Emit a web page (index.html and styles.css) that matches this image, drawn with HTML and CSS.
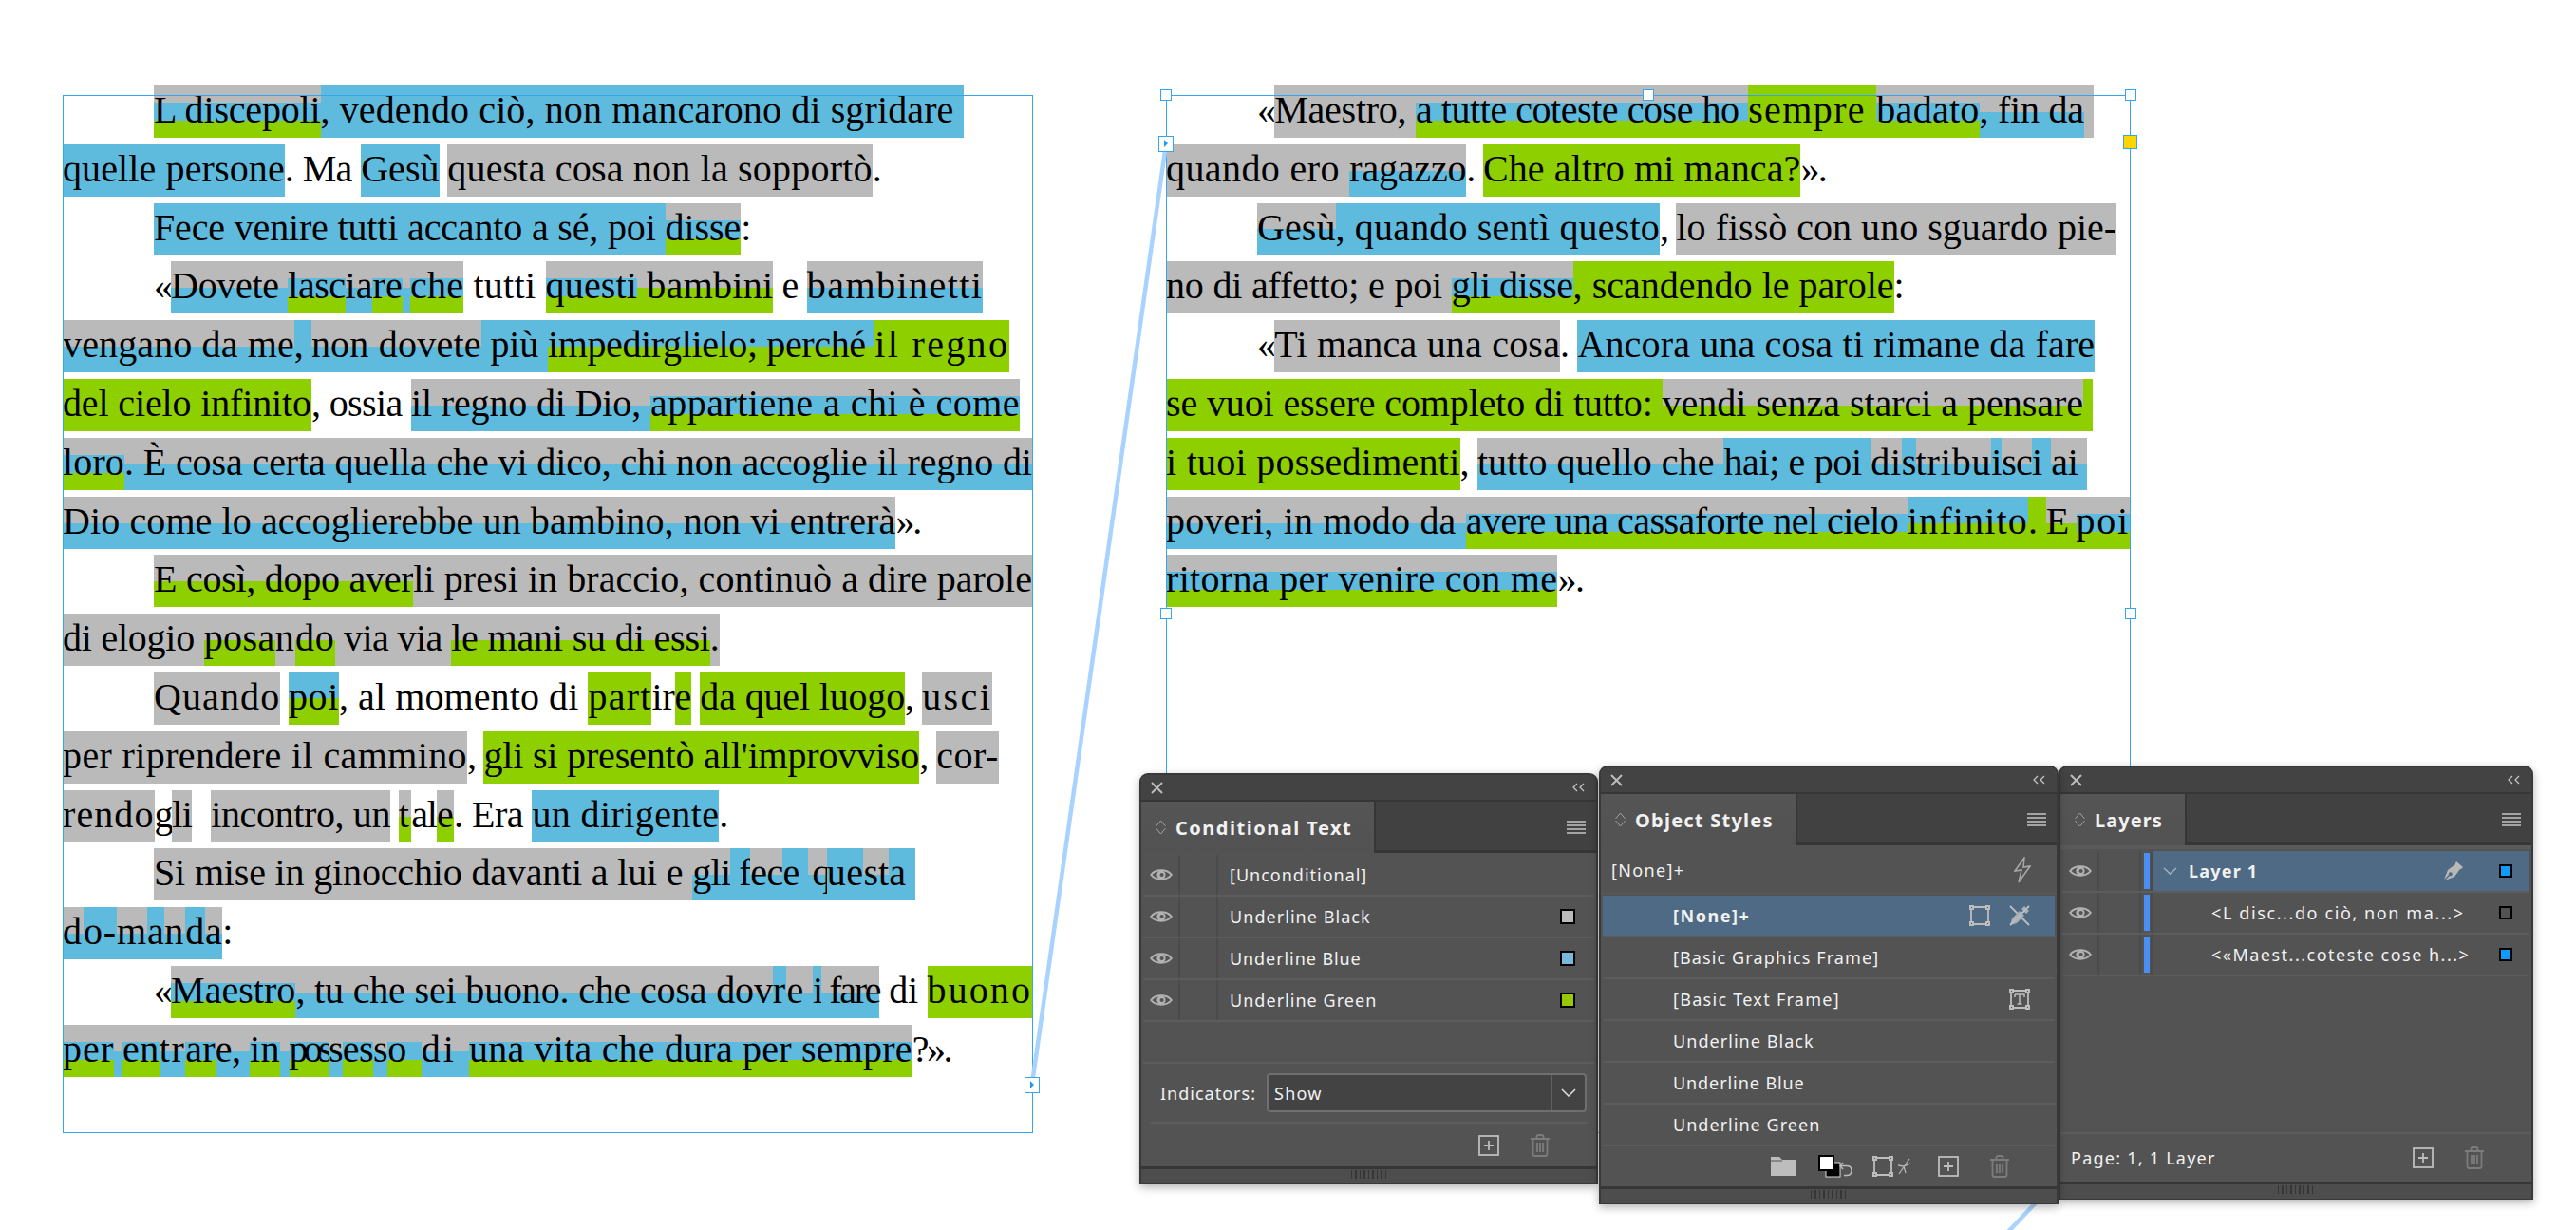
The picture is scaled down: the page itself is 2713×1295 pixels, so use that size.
FILE: index.html
```html
<!DOCTYPE html>
<html lang="en">
<head>
    <meta charset="UTF-8">
    <title>Conditional Text</title>
    <link rel="stylesheet" href="styles.css">
</head>
<body>
<svg width="0" height="0" class="defs">
    <symbol id="i-eye" viewBox="0 0 24 14"><path d="M1.2 7C6 .8 18 .8 22.8 7 18 13.2 6 13.2 1.2 7Z" fill="none" stroke="#b2b2b2" stroke-width="2"/><circle cx="12" cy="7" r="4.6" fill="#b2b2b2"/><circle cx="12.6" cy="7" r="2.1" fill="#555"/></symbol>
    <symbol id="i-plus" viewBox="0 0 22 22"><rect x="1" y="1" width="20" height="20" fill="none" stroke="#bdbdbd" stroke-width="1.8"/><path d="M11 6v10M6 11h10" stroke="#bdbdbd" stroke-width="1.8"/></symbol>
    <symbol id="i-trash" viewBox="0 0 22 24"><path d="M1 5h20M7.5 5V2.8Q7.5 1 9.5 1h3Q14.5 1 14.5 2.800V5M3.500 5v16q0 2 2 2h11q2 0 2-2V5M8 9v10M11 9v10M14 9v10" fill="none" stroke="#7c7c7c" stroke-width="1.8"/></symbol>
    <symbol id="i-frame" viewBox="0 0 22 22"><path d="M4 2h14M4 20h14M2 4v14M20 4v14" stroke="#bdbdbd" stroke-width="1.800" fill="none"/><path d="M0 0h5v5H0zM17 0h5v5h-5zM0 17h5v5H0zM17 17h5v5h-5z" fill="#bdbdbd"/><path d="M2 2h1v1H2zM19 2h1v1h-1zM2 19h1v1H2zM19 19h1v1h-1z" fill="#535353"/></symbol>
    <symbol id="i-menu" viewBox="0 0 20 14"><path d="M0 1h20M0 5h20M0 9h20M0 13h20" stroke="#c4c4c4" stroke-width="1.500"/></symbol>
</svg>

<div class="story story-left">
    <div class="line indent"><span class="s gbn" data-w="175.5">L discepoli</span><span class="s b" data-w="677.1">, vedendo ciò, non mancarono di sgridare </span></div>
    <div class="line"><span class="s b" data-w="233.8">quelle persone</span><span class="s" data-w="80.4">. Ma </span><span class="s b" data-w="82.4">Gesù</span><span class="s" data-w="8.7"> </span><span class="s g" data-w="447.4">questa cosa non la sopportò</span><span class="s" data-w="8.7">.</span></div>
    <div class="line indent"><span class="s b" data-w="538.5">Fece venire tutti accanto a sé, poi </span><span class="s gbn" data-w="79.7">disse</span><span class="s" data-w="8">:</span></div>
    <div class="line indent"><span class="s" data-w="18.1">«</span><span class="s gb" data-w="123.2">Dovete </span><span class="s gbn" data-w="60.3">lasc</span><span class="s gb" data-w="28.8">ia</span><span class="s gbn" data-w="31.5">re</span><span class="s gb" data-w="8"> </span><span class="s gbn" data-w="56.3">che</span><span class="s" data-w="86.4"> tutti </span><span class="s gbn" data-w="96.5">questi</span><span class="s gn" data-w="143.3"> bambini</span><span class="s" data-w="35.5"> e </span><span class="s gb" data-w="185.5">bambinetti</span></div>
    <div class="line"><span class="s gb" data-w="243.8">vengano da me</span><span class="s b" data-w="18.1">, </span><span class="s gb" data-w="178.8">non dovete</span><span class="s b" data-w="70.3"> più </span><span class="s bn" data-w="344.3">impedirglielo; perché </span><span class="s n" data-w="142">il regno</span></div>
    <div class="line"><span class="s n" data-w="261.9">del cielo infinito</span><span class="s" data-w="105.2">, ossia </span><span class="s gb" data-w="251.8">il regno di Dio, </span><span class="s gbn" data-w="389.2">appartiene a chi è come</span></div>
    <div class="line"><span class="s gbn" data-w="65">loro</span><span class="s gb" data-w="955.8">. È cosa certa quella che vi dico, chi non accoglie il regno di</span></div>
    <div class="line"><span class="s gb" data-w="877.4">Dio come lo accoglierebbe un bambino, non vi entrerà</span><span class="s" data-w="25.5">».</span></div>
    <div class="line indent"><span class="s gn" data-w="273.3">E così, dopo aver</span><span class="s g" data-w="651.7">li presi in braccio, continuò a dire parole</span></div>
    <div class="line"><span class="s g" data-w="148.7">di elogio </span><span class="s gn" data-w="75">posa</span><span class="s g" data-w="21.4">n</span><span class="s gn" data-w="41.5">do</span><span class="s g" data-w="122.6"> via via </span><span class="s gn" data-w="272.6">le mani su di essi</span><span class="s g" data-w="10">.</span></div>
    <div class="line indent"><span class="s g" data-w="133.3">Quando</span><span class="s" data-w="8.7"> </span><span class="s bn" data-w="52.9">poi</span><span class="s" data-w="262.6">, al momento di </span><span class="s n" data-w="67">part</span><span class="s" data-w="24.1">ir</span><span class="s n" data-w="17.4">e</span><span class="s" data-w="9.4"> </span><span class="s n" data-w="215.7">da quel luogo</span><span class="s" data-w="18.1">, </span><span class="s g" data-w="74.3">usci</span></div>
    <div class="line"><span class="s g" data-w="426">per riprendere il cammino</span><span class="s" data-w="17.4">, </span><span class="s n" data-w="458.8">gli si presentò all'improvviso</span><span class="s" data-w="18.1">, </span><span class="s g" data-w="65.6">cor-</span></div>
    <div class="line"><span class="s g" data-w="96.5">rendo</span><span class="s" data-w="18.8">g</span><span class="s g" data-w="20.8">li</span><span class="s" data-w="20.1"> </span><span class="s g" data-w="188.9">incontro, un</span><span class="s" data-w="8.7"> </span><span class="s gn" data-w="13.4">t</span><span class="s" data-w="26.8">al</span><span class="s gn" data-w="18.1">e</span><span class="s" data-w="82.4">. Era </span><span class="s b" data-w="196.9">un dirigente</span><span class="s" data-w="8">.</span></div>
    <div class="line indent"><span class="s g" data-w="567.3">Si mise in ginocchio davanti a lui e </span><span class="s gb" data-w="40.2">gli</span><span class="s b" data-w="20.8"> f</span><span class="s gb" data-w="34.2">ec</span><span class="s b" data-w="26.1">e</span><span class="s gb" data-w="20.1"> q</span><span class="s b" data-w="38.8">ue</span><span class="s gb" data-w="26.8">st</span><span class="s b" data-w="27.5">a </span></div>
    <div class="line"><span class="s gb" data-w="22.1">d</span><span class="s b" data-w="34.8">o-</span><span class="s gb" data-w="32.2">m</span><span class="s b" data-w="18.1">a</span><span class="s gb" data-w="22.1">n</span><span class="s b" data-w="20.8">d</span><span class="s gb" data-w="18.1">a</span><span class="s" data-w="8">:</span></div>
    <div class="line indent"><span class="s" data-w="18.1">«</span><span class="s gbn" data-w="131.3">Maestro</span><span class="s gb" data-w="502.4">, tu che sei buono. che cosa dov</span><span class="s b" data-w="14.7">r</span><span class="s gb" data-w="27.5">e</span><span class="s b" data-w="9.4">i</span><span class="s gb" data-w="61"> fare</span><span class="s" data-w="50.2"> di </span><span class="s n" data-w="110.5">buono</span></div>
    <div class="line"><span class="s gbn" data-w="54.3">per</span><span class="s gb" data-w="8.7"> </span><span class="s gbn" data-w="38.8">en</span><span class="s gb" data-w="27.5">tr</span><span class="s gbn" data-w="31.5">ar</span><span class="s gb" data-w="36.2">e, </span><span class="s gbn" data-w="32.2">in</span><span class="s gb" data-w="9.4"> </span><span class="s gbn" data-w="41.5">pos</span><span class="s gb" data-w="14.7">s</span><span class="s gbn" data-w="32.2">es</span><span class="s gb" data-w="15.4">s</span><span class="s gbn" data-w="35.5">o </span><span class="s gb" data-w="50.2">di </span><span class="s gbn" data-w="466.8">una vita che dura per sempre</span><span class="s" data-w="40.2">?».</span></div>
</div>

<div class="story story-right">
    <div class="line indent"><span class="s" data-w="18.3">«</span><span class="s g" data-w="148.7">Maestro, </span><span class="s gbn" data-w="350.2">a tutte coteste cose ho </span><span class="s n" data-w="135.2">sempre </span><span class="s gbn" data-w="108.2">badato</span><span class="s gb" data-w="110.2">, fin da</span><span class="s g" data-w="10.1"> </span></div>
    <div class="line"><span class="s g" data-w="193.3">quando ero </span><span class="s gb" data-w="123">ragazzo</span><span class="s" data-w="17.6">. </span><span class="s n" data-w="334.6">Che altro mi manca?</span><span class="s" data-w="26.4">».</span></div>
    <div class="line indent"><span class="s gb" data-w="82.5">Gesù</span><span class="s b" data-w="341.4">, quando sentì questo</span><span class="s" data-w="17.6">, </span><span class="s g" data-w="463.7">lo fissò con uno sguardo pie-</span></div>
    <div class="line"><span class="s g" data-w="300.8">no di affetto; e poi </span><span class="s gbn" data-w="127.8">gli disse</span><span class="s n" data-w="338">, scandendo le parole</span><span class="s" data-w="8">:</span></div>
    <div class="line indent"><span class="s" data-w="18.3">«</span><span class="s g" data-w="300.8">Ti manca una cosa</span><span class="s" data-w="18.3">. </span><span class="s b" data-w="544.9">Ancora una cosa ti rimane da fare</span></div>
    <div class="line"><span class="s n" data-w="522.5">se vuoi essere completo di tutto: </span><span class="s gn" data-w="443.5">vendi senza starci a pensare</span><span class="s n" data-w="10.1"> </span></div>
    <div class="line"><span class="s n" data-w="309.6">i tuoi possedimenti</span><span class="s" data-w="18.3">, </span><span class="s gb" data-w="259.6">tutto quello che </span><span class="s b" data-w="154.8">hai; e poi </span><span class="s gb" data-w="32.4">di</span><span class="s b" data-w="14.9">s</span><span class="s gb" data-w="79.8">tribu</span><span class="s b" data-w="10.8">i</span><span class="s gb" data-w="31.8">sc</span><span class="s b" data-w="20.3">i </span><span class="s gb" data-w="37.9">ai </span></div>
    <div class="line"><span class="s gb" data-w="315.7">poveri, in modo da </span><span class="s gbn" data-w="465.1">avere una cassaforte nel cielo </span><span class="s bn" data-w="127.1">infinito</span><span class="s n" data-w="18.9">. </span><span class="s gn" data-w="31.8">E </span><span class="s gbn" data-w="56.1">poi</span></div>
    <div class="line"><span class="s gbn" data-w="412.4">ritorna per venire con me</span><span class="s" data-w="27">».</span></div>
</div>

<div class="frame frame-left"></div>
<div class="frame frame-right">
    <i class="handle tl"></i><i class="handle tm"></i><i class="handle tr"></i>
    <i class="handle ml"></i><i class="handle mr"></i>
</div>

<svg class="threads" width="2713" height="1295">
    <line x1="1087" y1="1141" x2="1228" y2="152"/>
    <line x1="2112" y1="1300" x2="2150" y2="1260"/>
</svg>
<i class="port port-out"><b></b></i>
<i class="port port-in"><b></b></i>
<i class="port-yellow"></i>

<section class="panel panel-cond">
    <div class="titlebar">
        <svg width="13" height="13" viewBox="0 0 13 13"><path d="M1 1l11 11M12 1L1 12" stroke="#bcbcbc" stroke-width="2"/></svg>
        <svg width="13" height="10" viewBox="0 0 13 10"><path d="M5 1L1 5l4 4M12 1L8 5l4 4" fill="none" stroke="#c4c4c4" stroke-width="1.300"/></svg>
    </div>
    <div class="tabs">
        <div class="tab tab-cond">
            <svg class="updown" width="11" height="16" viewBox="0 0 11 16"><path d="M.5 7L5.500 1l5 6M.5 9l5 6 5-6" fill="none" stroke="#a2a2a2"/></svg>
            <span class="s fit title" data-w="186.3">Conditional Text</span>
        </div>
        <svg class="menu" width="20" height="14"><use href="#i-menu"/></svg>
    </div>
    <div class="list list-cond">
        <div class="row"><div class="cell-eye"><svg width="24" height="14"><use href="#i-eye"/></svg></div><div class="cell-blank"></div><div class="name name-cond"><span class="s fit" data-w="145.3">[Unconditional]</span></div></div>
        <div class="row"><div class="cell-eye"><svg width="24" height="14"><use href="#i-eye"/></svg></div><div class="cell-blank"></div><div class="name name-cond"><span class="s fit" data-w="148.7">Underline Black</span><i class="swatch sw-gray"></i></div></div>
        <div class="row"><div class="cell-eye"><svg width="24" height="14"><use href="#i-eye"/></svg></div><div class="cell-blank"></div><div class="name name-cond"><span class="s fit" data-w="138.7">Underline Blue</span><i class="swatch sw-blue"></i></div></div>
        <div class="row"><div class="cell-eye"><svg width="24" height="14"><use href="#i-eye"/></svg></div><div class="cell-blank"></div><div class="name name-cond"><span class="s fit" data-w="155.3">Underline Green</span><i class="swatch sw-green"></i></div></div>
        <div class="row"></div>
    </div>
    <div class="indicators">
        <span class="s fit" data-w="101">Indicators:</span>
        <div class="select"><span class="s fit" data-w="50.7">Show</span><div class="select-arrow"><svg width="16" height="9" viewBox="0 0 16 9"><path d="M1 1l7 7 7-7" fill="none" stroke="#e0e0e0" stroke-width="1.500"/></svg></div></div>
    </div>
    <div class="tools tools-ruled">
        <svg width="22" height="22"><use href="#i-plus"/></svg>
        <svg width="22" height="24"><use href="#i-trash"/></svg>
    </div>
    <div class="grip"><i></i></div>
</section>

<section class="panel panel-layers">
    <div class="titlebar">
        <svg width="13" height="13" viewBox="0 0 13 13"><path d="M1 1l11 11M12 1L1 12" stroke="#bcbcbc" stroke-width="2"/></svg>
        <svg width="13" height="10" viewBox="0 0 13 10"><path d="M5 1L1 5l4 4M12 1L8 5l4 4" fill="none" stroke="#c4c4c4" stroke-width="1.300"/></svg>
    </div>
    <div class="tabs">
        <div class="tab tab-layers">
            <svg class="updown" width="11" height="16" viewBox="0 0 11 16"><path d="M.5 7L5.500 1l5 6M.5 9l5 6 5-6" fill="none" stroke="#a2a2a2"/></svg>
            <span class="s fit title" data-w="71.7">Layers</span>
        </div>
        <svg class="menu" width="20" height="14"><use href="#i-menu"/></svg>
    </div>
    <div class="list list-layers">
        <div class="row"><div class="cell-eye"><svg width="24" height="14"><use href="#i-eye"/></svg></div><div class="cell-blank layer-blank"></div><div class="cell-bar"><i></i></div>
            <div class="name name-layer selected">
                <svg class="twist" width="15" height="8" viewBox="0 0 15 8"><path d="M1 1l6.500 6L14 1" fill="none" stroke="#a8b4c0" stroke-width="1.300"/></svg>
                <span class="s fit bold" data-w="73.3">Layer 1</span>
                <svg class="pen" width="22" height="22" viewBox="0 0 22 22"><path d="M14 1l7 6-2 2-1 0-6 8-10 4 5-5a2 2 0 1 0-1-1l-5 5 4-10 8-6v-1z" fill="#b8b8b8"/></svg>
                <i class="swatch small sw-layer"></i>
            </div>
        </div>
        <div class="row"><div class="cell-eye"><svg width="24" height="14"><use href="#i-eye"/></svg></div><div class="cell-blank layer-blank"></div><div class="cell-bar"><i></i></div>
            <div class="name name-sub"><span class="s fit" data-w="266.7">&lt;L disc...do ciò, non ma...&gt;</span><i class="swatch small sw-none"></i></div>
        </div>
        <div class="row"><div class="cell-eye"><svg width="24" height="14"><use href="#i-eye"/></svg></div><div class="cell-blank layer-blank"></div><div class="cell-bar"><i></i></div>
            <div class="name name-sub"><span class="s fit" data-w="272.3">&lt;«Maest...coteste cose h...&gt;</span><i class="swatch small sw-layer"></i></div>
        </div>
    </div>
    <div class="tools tools-page">
        <span class="s fit page-count" data-w="152.7">Page: 1, 1 Layer</span>
        <svg width="22" height="22"><use href="#i-plus"/></svg>
        <svg width="22" height="24"><use href="#i-trash"/></svg>
    </div>
    <div class="grip"><i></i></div>
</section>

<section class="panel panel-styles">
    <div class="titlebar">
        <svg width="13" height="13" viewBox="0 0 13 13"><path d="M1 1l11 11M12 1L1 12" stroke="#bcbcbc" stroke-width="2"/></svg>
        <svg width="13" height="10" viewBox="0 0 13 10"><path d="M5 1L1 5l4 4M12 1L8 5l4 4" fill="none" stroke="#c4c4c4" stroke-width="1.300"/></svg>
    </div>
    <div class="tabs">
        <div class="tab tab-styles">
            <svg class="updown" width="11" height="16" viewBox="0 0 11 16"><path d="M.5 7L5.500 1l5 6M.5 9l5 6 5-6" fill="none" stroke="#a2a2a2"/></svg>
            <span class="s fit title" data-w="145.7">Object Styles</span>
        </div>
        <svg class="menu" width="20" height="14"><use href="#i-menu"/></svg>
    </div>
    <div class="style-head">
        <span class="s fit" data-w="77.3">[None]+</span>
        <svg width="18" height="28" viewBox="0 0 18 28"><path d="M11 1L1 15l7-1-3 13 12-17-7 1z" fill="none" stroke="#a8a8a8" stroke-width="1.500"/></svg>
    </div>
    <div class="list list-styles">
        <div class="row selected"><span class="s fit bold" data-w="81.3">[None]+</span>
            <svg class="row-icon first" width="22" height="22"><use href="#i-frame"/></svg>
            <svg class="row-icon" width="22" height="22" viewBox="0 0 22 22"><path d="M1 1l20 20" stroke="#bcbcbc" stroke-width="1.800"/><path d="M16 1l5 5-3 3-5-5zM11 6l5 5-8 8-7 2 2-7z" fill="#a9b0b8"/><path d="M21 1L1 21" stroke="#bcbcbc" stroke-width="1.800"/></svg>
        </div>
        <div class="row"><span class="s fit" data-w="217.3">[Basic Graphics Frame]</span></div>
        <div class="row"><span class="s fit" data-w="176">[Basic Text Frame]</span>
            <svg class="row-icon first" width="22" height="22" viewBox="0 0 22 22"><use href="#i-frame"/><path d="M6 6h10v3M6 9V6M11 6v10M8.500 16h5" fill="none" stroke="#bdbdbd" stroke-width="1.500"/></svg>
        </div>
        <div class="row"><span class="s fit" data-w="148.7">Underline Black</span></div>
        <div class="row"><span class="s fit" data-w="138.7">Underline Blue</span></div>
        <div class="row"><span class="s fit" data-w="155.3">Underline Green</span></div>
    </div>
    <div class="tools">
        <svg width="26" height="20" viewBox="0 0 26 20"><path d="M0 20V0h9l3 3h14v17z" fill="#bdbdbd"/><path d="M0 4h12" stroke="#535353"/></svg>
        <svg class="tool-override" width="38" height="24" viewBox="0 0 38 24"><rect x="8" y="8" width="15" height="15" fill="#000" stroke="#ddd"/><rect x="1" y="1" width="15" height="15" fill="#fff" stroke="#000" stroke-width="2"/><path d="M26 8l-3 3.500 3 3.500M24 11.500h6q5 0 5 5t-5 5h-3" fill="none" stroke="#bbb" stroke-width="1.500"/></svg>
        <svg class="tool-frame" width="22" height="22"><use href="#i-frame"/></svg>
        <svg class="tool-star" width="15" height="18" viewBox="0 0 15 18"><path d="M13 1L2 17M1 8l6 1 7-3M7 9l2 7" fill="none" stroke="#b4b4b4" stroke-width="1.300"/></svg>
        <svg class="tool-plus" width="22" height="22"><use href="#i-plus"/></svg>
        <svg width="22" height="24"><use href="#i-trash"/></svg>
    </div>
    <div class="grip"><i></i></div>
</section>

<script src="fit.js"></script>
</body>
</html>
```

FILE: styles.css
```css
body {
    margin: 0;
    width: 2713px;
    height: 1295px;
    position: relative;
    overflow: hidden;
    background-color: white;
    font-family: "Noto Sans", sans-serif;
}
.defs {
    position: absolute;
}

/* text flows */
.story {
    position: absolute;
    top: 90px;
    font-family: "Liberation Serif", serif;
    font-size: 40px;
    line-height: 51px;
    color: black;
}
.story-left {
    left: 66px;
    width: 1030px;
}
.story-right {
    left: 1228px;
    width: 1030px;
}
.line {
    display: flex;
    height: 55px;
    margin-bottom: 6.81px;
}
.line.indent {
    padding-left: 96px;
}
.s {
    display: inline-block;
    flex-shrink: 0;
    white-space: pre;
}

/* condition bands: black on top, blue in the middle, green at the bottom */
.g { background-color: #bababa; }
.b { background-color: #5fbbde; }
.n { background-color: #8ecf00; }
.gb { background: linear-gradient(#bababa 50%, #5fbbde 50%); }
.gn { background: linear-gradient(#bababa 50%, #8ecf00 50%); }
.bn { background: linear-gradient(#5fbbde 50%, #8ecf00 50%); }
.gbn { background: linear-gradient(#bababa 33.3%, #5fbbde 33.3%, #5fbbde 66.6%, #8ecf00 66.6%); }

/* text frames */
.frame {
    position: absolute;
    box-sizing: border-box;
    border: 1px solid #37a5ee;
    top: 100px;
    height: 1093px;
}
.frame-left {
    left: 66px;
    width: 1022px;
}
.frame-right {
    left: 1228px;
    width: 1016px;
}
.handle {
    position: absolute;
    width: 10px;
    height: 10px;
    background: white;
    border: 1px solid #37a5ee;
}
.tl { left: -7px; top: -7px; }
.tm { left: 501px; top: -7px; }
.tr { right: -7px; top: -7px; }
.ml { left: -7px; top: 539px; }
.mr { right: -7px; top: 539px; }

.threads {
    position: absolute;
    left: 0;
    top: 0;
}
.threads line {
    stroke: #a9d3ff;
    stroke-width: 4.5;
}
.port {
    position: absolute;
    box-sizing: border-box;
    width: 16px;
    height: 17px;
    background: white;
    border: 1px solid #37a5ee;
}
.port b {
    position: absolute;
    left: 5px;
    top: 3px;
    border-left: 4px solid #1e9bf0;
    border-top: 4.5px solid transparent;
    border-bottom: 4.5px solid transparent;
}
.port-out {
    left: 1079px;
    top: 1134px;
}
.port-in {
    left: 1220px;
    top: 143px;
}
.port-yellow {
    position: absolute;
    box-sizing: border-box;
    left: 2236px;
    top: 142px;
    width: 15px;
    height: 15px;
    background: #ffd500;
    border: 1.5px solid #37a5ee;
}

/* palettes */
.panel {
    position: absolute;
    box-sizing: border-box;
    display: flex;
    flex-direction: column;
    background-color: #535353;
    border: 2px solid #393939;
    border-bottom-width: 1px;
    border-radius: 9px 9px 0 0;
    box-shadow: 0 3px 10px rgba(0, 0, 0, 0.3);
    color: #f1f1f1;
    font-size: 18px;
}
.panel-cond { left: 1200px; top: 814px; width: 483px; height: 433px; }
.panel-styles { left: 1684px; top: 806px; width: 484px; height: 462px; }
.panel-layers { left: 2168px; top: 806px; width: 500px; height: 457px; }

.titlebar {
    height: 26px;
    flex-shrink: 0;
    display: flex;
    align-items: center;
    justify-content: space-between;
    padding: 0 12px 0 10px;
    background-color: #434343;
    border-bottom: 2px solid #363636;
    border-radius: 7px 7px 0 0;
}
.tabs {
    height: 54px;
    flex-shrink: 0;
    display: flex;
    align-items: center;
    justify-content: space-between;
    padding-right: 11px;
    background-color: #414141;
    box-shadow: inset 0 -3px 0 #363636;
}
.tab {
    height: 100%;
    display: flex;
    align-items: center;
    padding-left: 15px;
    box-sizing: border-box;
    background: linear-gradient(#555, #525252);
    border-right: 2px solid #363636;
}
.tab-cond { width: 247px; }
.tab-styles { width: 207px; }
.tab-layers { width: 133px; }
.updown {
    margin-right: 10px;
}
.title {
    font-size: 20px;
    font-weight: 700;
}
.bold {
    font-weight: 700;
}

.row {
    height: 42px;
    display: flex;
    align-items: center;
    border-bottom: 2px solid #5c5c5c;
}
.list-cond {
    padding: 2px 2px 0;
}
.list-layers {
    height: 304px;
    box-sizing: border-box;
    padding: 2px 2px 0;
    border-top: 4px solid #5a5a5a;
    border-bottom: 2px solid #5c5c5c;
}
.cell-eye {
    width: 37px;
    height: 100%;
    display: flex;
    align-items: center;
    justify-content: center;
    border-right: 2px solid #4b4b4b;
}
.cell-blank {
    width: 38px;
    height: 100%;
    border-right: 2px solid #4b4b4b;
}
.layer-blank {
    width: 42px;
}
.cell-bar {
    width: 12px;
    height: 100%;
    padding: 2px 0 0 3px;
    box-sizing: border-box;
    border-right: 2px solid #4b4b4b;
}
.cell-bar i {
    display: block;
    width: 6px;
    height: 38px;
    background-color: #4a90f2;
}
.name {
    flex: 1;
    height: 100%;
    display: flex;
    align-items: center;
}
.name-cond {
    padding-left: 12px;
}
.name-layer {
    margin-left: 1px;
    padding-left: 10px;
    gap: 12px;
}
.name-sub {
    padding-left: 62px;
}
.selected {
    background-color: #4f6a85;
}
.pen {
    margin-left: auto;
    margin-right: 25px;
}
.swatch {
    box-sizing: border-box;
    margin-left: auto;
    margin-right: 20px;
    width: 16px;
    height: 16px;
    border: 2px solid black;
}
.swatch.small {
    width: 14px;
    height: 14px;
    margin-right: 18px;
}
.pen + .swatch {
    margin-left: 0;
}
.sw-gray { background-color: #bbbbbb; }
.sw-blue { background-color: #79b8dc; }
.sw-green { background-color: #97c800; }
.sw-layer { background-color: #0f9cff; }
.sw-none { background-color: transparent; }

.style-head {
    height: 50px;
    flex-shrink: 0;
    display: flex;
    align-items: center;
    justify-content: space-between;
    padding: 2px 27px 0 11px;
    box-sizing: border-box;
}
.list-styles {
    padding: 2px 2px 0;
    background-color: #535353;
    border-top: 1px solid #5a5a5a;
}
.list-styles .row {
    padding-left: 74px;
}
.row-icon {
    margin-right: 20px;
}
.row-icon.first {
    margin-left: auto;
}
.row-icon:last-child {
    margin-right: 26px;
}
.row-icon.first:last-child {
    margin-right: 26px;
}
.row-icon.first:not(:last-child) {
    margin-right: 20px;
}

.indicators {
    display: flex;
    align-items: center;
    gap: 11px;
    margin: 10px 10px 0 20px;
    height: 41px;
    flex-shrink: 0;
}
.select {
    flex: 1;
    height: 41px;
    box-sizing: border-box;
    display: flex;
    align-items: center;
    justify-content: space-between;
    padding-left: 6px;
    background-color: #434343;
    border: 2px solid #6f6f6f;
    border-radius: 4px;
}
.select-arrow {
    width: 34px;
    height: 100%;
    display: flex;
    align-items: center;
    justify-content: center;
    border-left: 2px solid #5f5f5f;
}
.tools {
    flex: 1;
    display: flex;
    align-items: center;
    justify-content: flex-end;
    gap: 32px;
    padding-right: 49px;
}
.tools-ruled {
    margin: 10px 10px 0;
    padding-right: 38px;
    border-top: 2px solid #5e5e5e;
}
.tools-page {
    padding-left: 11px;
}
.page-count {
    margin-right: auto;
}
.tool-override { margin-left: -8px; }
.tool-frame { margin-left: -13px; }
.tool-star { margin-left: -28px; }
.tool-plus { margin-left: -4px; }

.grip {
    height: 15px;
    flex-shrink: 0;
    display: flex;
    justify-content: center;
    align-items: flex-start;
    padding-top: 0;
    background-color: #4d4d4d;
    border-top: 3px solid #363636;
}
.grip i {
    display: block;
    width: 38px;
    height: 9px;
    margin-top: 1px;
    background: repeating-linear-gradient(90deg, #363636 0 1.5px, transparent 1.5px 4.5px);
}
```

FILE: fit.js
```js
// the book font is not installed: squeeze each run to the width it has in the layout
document.querySelectorAll('[data-w]').forEach(function (el) {
    var target = parseFloat(el.dataset.w);
    var natural = el.getBoundingClientRect().width;
    var chars = Array.from(el.textContent).length;
    el.style.letterSpacing = ((target - natural) / chars) + 'px';
    el.style.width = target + 'px';
});
```
